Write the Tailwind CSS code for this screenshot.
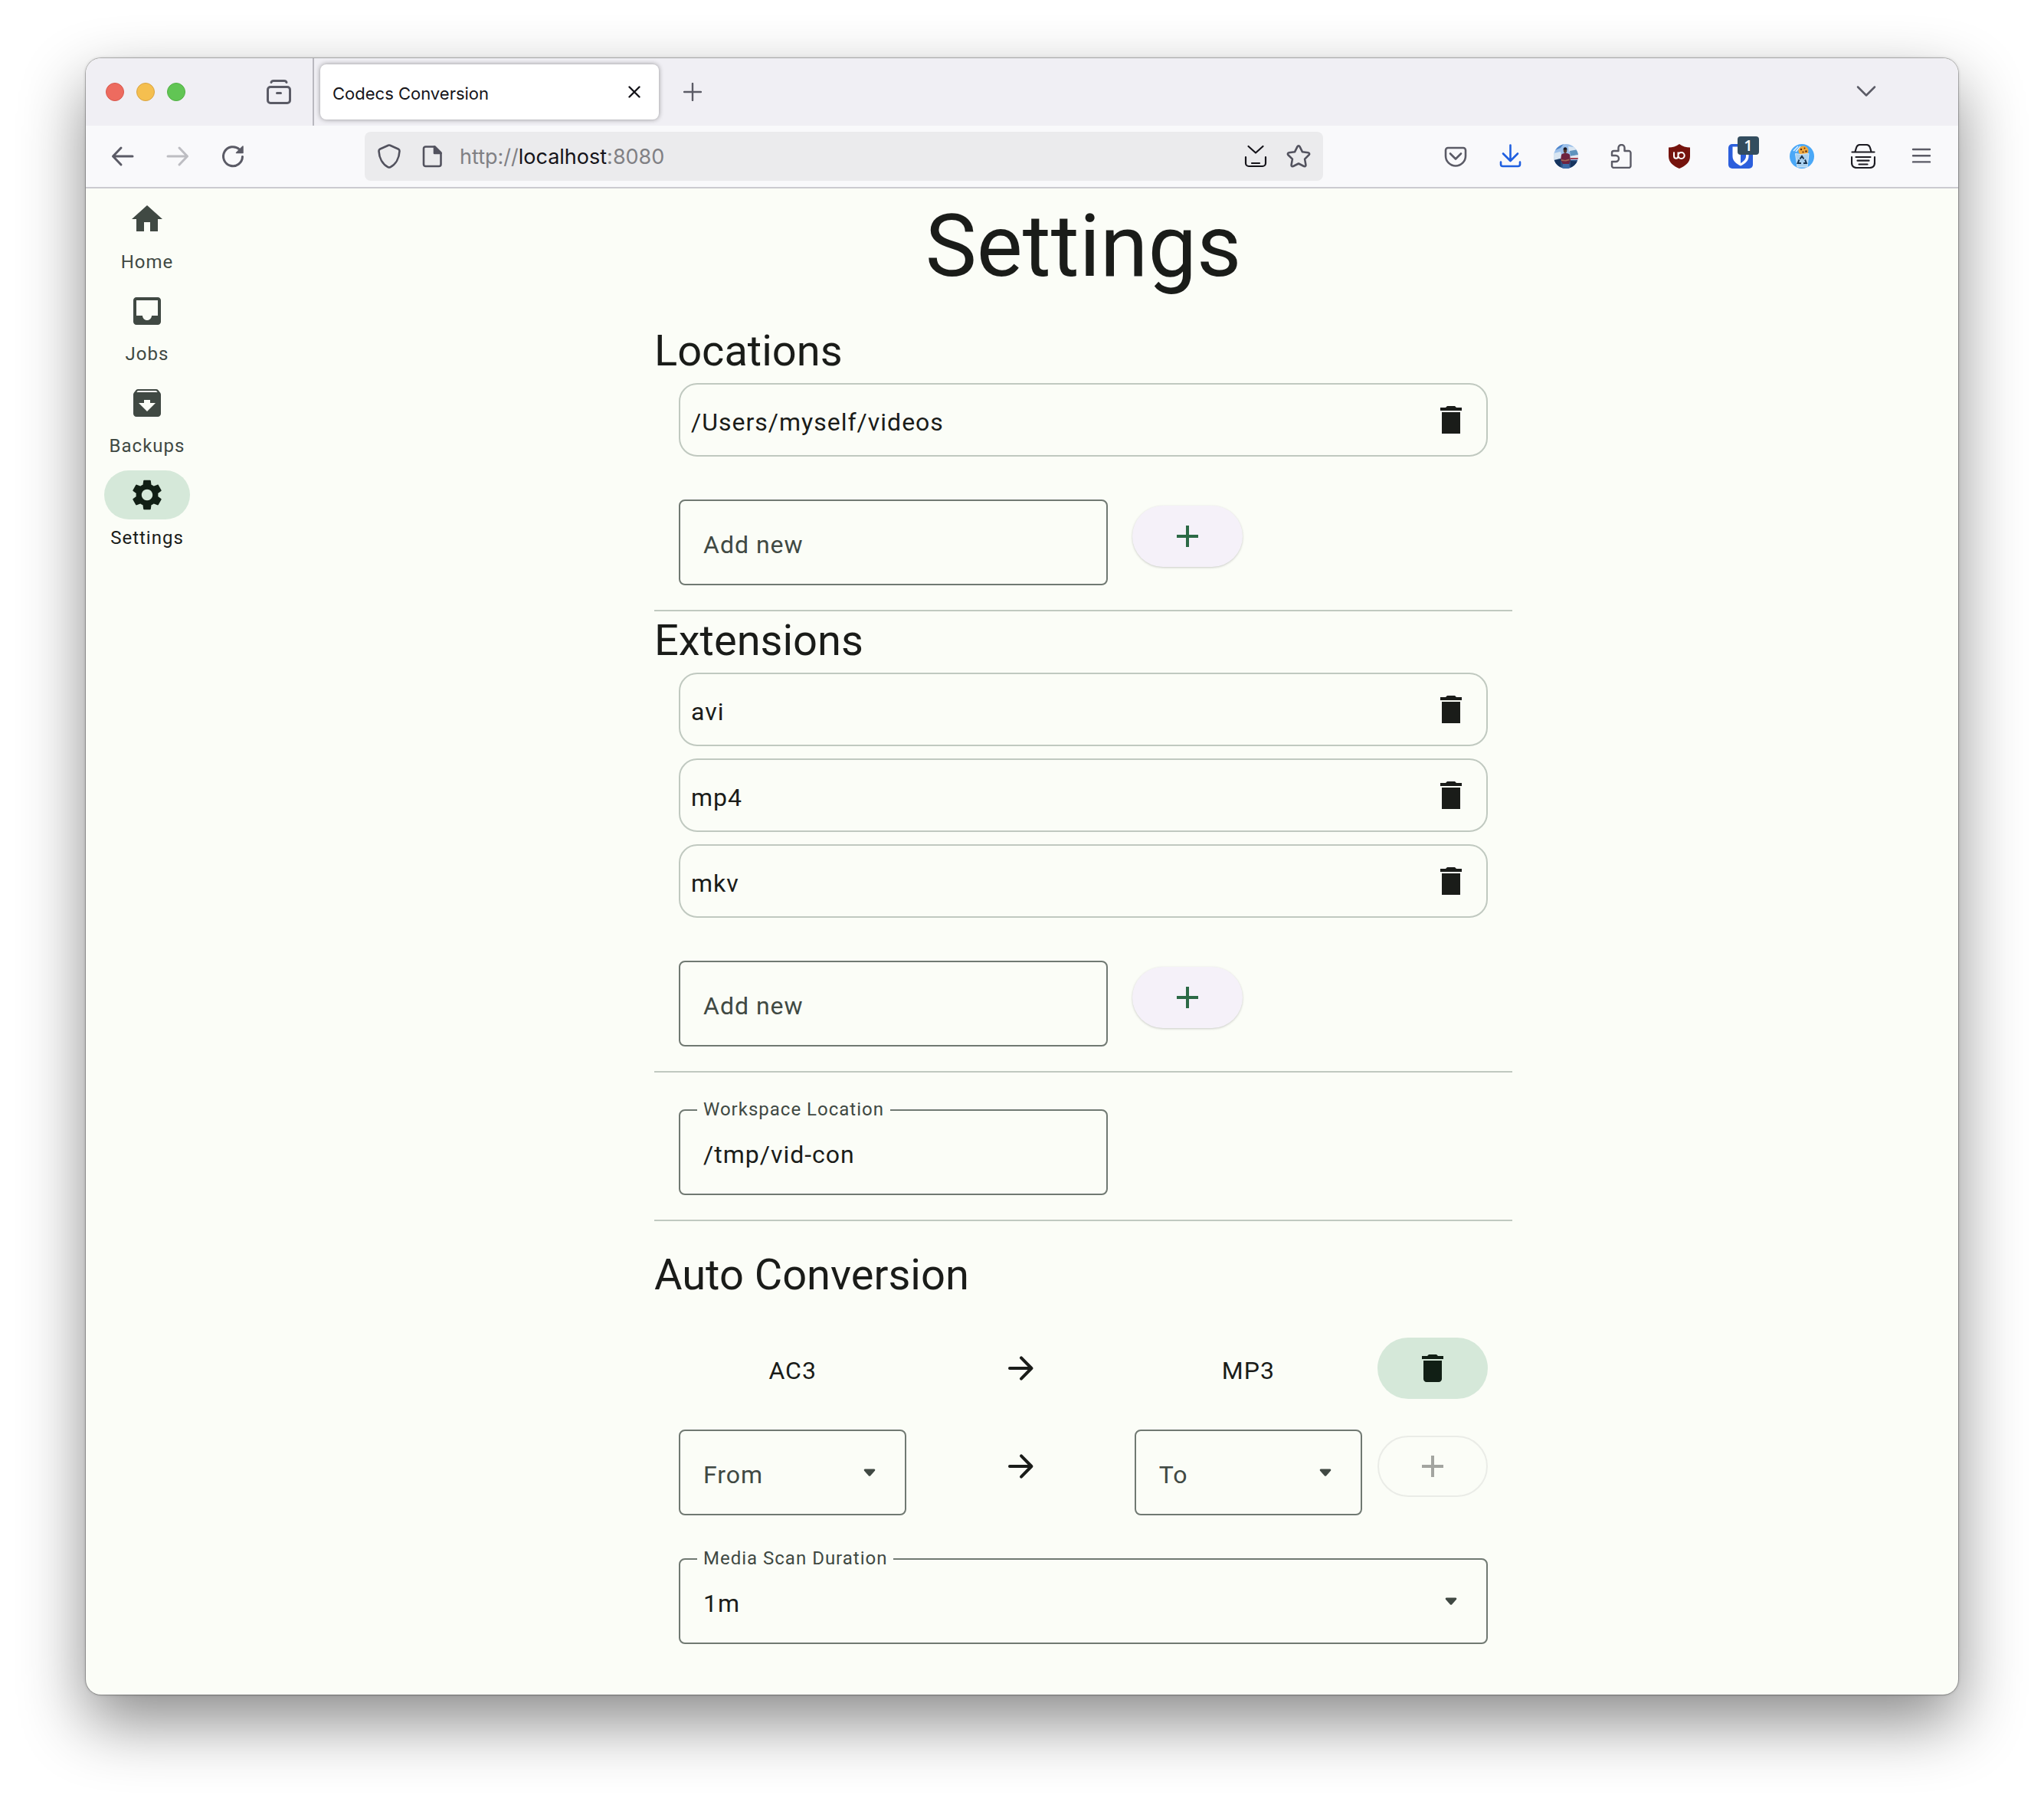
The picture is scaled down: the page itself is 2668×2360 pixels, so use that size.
<!DOCTYPE html>
<html lang="en">
<head>
<meta charset="utf-8">
<title>Codecs Conversion</title>
<script src="https://cdn.jsdelivr.net/npm/@tailwindcss/browser@4"></script>
</head>
<body class="bg-white px-28 pt-19 pb-37 font-[Roboto,sans-serif] text-[#1a1c19]">

<svg class="hidden" aria-hidden="true">
  <symbol id="trash-sharp" viewBox="0 0 24 24"><path d="M6 21h12V7H6zM19 4h-3.500l-1-1h-5l-1 1H5v2h14z"/></symbol>
  <symbol id="trash" viewBox="0 0 24 24"><path d="M6 19c0 1.100.900 2 2 2h8c1.100 0 2-.900 2-2V7H6zM19 4h-3.500l-1-1h-5l-1 1H5v2h14z"/></symbol>
  <symbol id="plus" viewBox="0 0 24 24"><path d="M19 13h-6v6h-2v-6H5v-2h6V5h2v6h6z"/></symbol>
  <symbol id="arrow" viewBox="0 0 24 24"><path d="M5 12h14M12.500 5.200 19.200 12l-6.700 6.800" fill="none" stroke="currentColor" stroke-width="2" stroke-linecap="round" stroke-linejoin="round"/></symbol>
  <symbol id="caret" viewBox="0 0 24 24"><path d="M9 9.800h6c.600 0 .800.700.500 1.100l-3 3.300c-.300.300-.700.300-1 0l-3-3.300c-.300-.400-.100-1.100.500-1.100z"/></symbol>
</svg>

<div class="overflow-hidden rounded-[20px] bg-[#fbfdf7] shadow-[0_0_0_1px_rgba(0,0,0,0.22),0_0_4px_rgba(0,0,0,0.2),0_36px_84px_rgba(0,0,0,0.46)]">

  <!-- Tab strip -->
  <div class="flex h-22 items-center bg-[#f0eff4] pr-26">
    <div class="flex gap-4 pl-[26px]">
      <span class="size-6 rounded-full border border-[#d8574c] bg-[#ed6b5f]"></span>
      <span class="size-6 rounded-full border border-[#d9a441] bg-[#f5bf4f]"></span>
      <span class="size-6 rounded-full border border-[#52b044] bg-[#61c554]"></span>
    </div>
    <button aria-label="Recent browsing" class="ml-[106px] text-[#5b5b66]">
      <svg class="size-8" viewBox="0 0 32 32" fill="none" stroke="currentColor" stroke-width="3" stroke-linecap="round"><rect x="1.500" y="9.500" width="29" height="21" rx="3.500"/><path d="M6 3.500C6.500 2 7.500 1.500 9 1.500h14c1.500 0 2.500.500 3 2M13.500 17.500h5"/></svg>
    </button>
    <div class="ml-7 h-full w-0.5 bg-[#b9b8bf]"></div>
    <div class="ml-2 flex h-18 w-[442px] items-center justify-between rounded-lg bg-white pr-6 pl-4 shadow-[0_0_6px_rgba(0,0,0,0.4)]">
      <span class="pt-1 font-[Inter,sans-serif] text-[22px] leading-8 text-[#15141a]">Codecs Conversion</span>
      <button aria-label="Close tab" class="text-[#15141a]">
        <svg class="size-4" viewBox="0 0 16 16" fill="none" stroke="currentColor" stroke-width="2.400" stroke-linecap="round"><path d="M1.500 1.500l13 13M14.500 1.500l-13 13"/></svg>
      </button>
    </div>
    <button aria-label="New tab" class="ml-8 text-[#5b5b66]">
      <svg class="size-6" viewBox="0 0 24 24" fill="none" stroke="currentColor" stroke-width="2.400" stroke-linecap="round"><path d="M12 1v22M1 12h22"/></svg>
    </button>
    <button aria-label="List all tabs" class="ml-auto text-[#5b5b66]">
      <svg class="size-8" viewBox="0 0 32 32" fill="none" stroke="currentColor" stroke-width="2.500" stroke-linecap="round" stroke-linejoin="round"><path d="M5 9.500l11 11 11-11"/></svg>
    </button>
  </div>

  <!-- Navigation toolbar -->
  <div class="flex h-[82px] items-center border-b-2 border-[#cccbd0] bg-[#f9f9fb] pr-8 text-[#5b5b66]">
    <div class="flex w-[364px] shrink-0 gap-10 pl-8">
      <button aria-label="Back"><svg class="size-8" viewBox="0 0 32 32" fill="none" stroke="currentColor" stroke-width="3" stroke-linecap="round" stroke-linejoin="round"><path d="M29 16H3.500M14 5 3.500 16 14 27"/></svg></button>
      <button aria-label="Forward" disabled class="text-[#bdbdc2]"><svg class="size-8" viewBox="0 0 32 32" fill="none" stroke="currentColor" stroke-width="3" stroke-linecap="round" stroke-linejoin="round"><path d="M3 16h25.500M18 5l10.500 11L18 27"/></svg></button>
      <button aria-label="Reload"><svg class="size-8" viewBox="0 0 32 32" fill="none" stroke="currentColor" stroke-width="3" stroke-linecap="round"><path d="M28.500 16.500A12.500 12.500 0 1 1 24.500 7"/><path d="M29 3v8.500h-8.500z" fill="currentColor" stroke-width="1.500" stroke-linejoin="round"/></svg></button>
    </div>
    <div class="flex h-16 flex-1 items-center rounded-lg bg-[#ebebed] pr-4 pl-4">
      <svg class="size-8 shrink-0" viewBox="0 0 32 32" fill="none" stroke="#52525e" stroke-width="2.600" stroke-linejoin="round"><path d="M14.800 1.800a3 3 0 0 1 2.400 0l10.600 4.700a3 3 0 0 1 1.700 2.900C29 18 25 26.500 17.200 30.300a3 3 0 0 1-2.400 0C7 26.500 3 18 2.500 9.400a3 3 0 0 1 1.700-2.900z"/></svg>
      <svg class="ml-6 size-8 shrink-0" viewBox="0 0 32 32" fill="none" stroke="#52525e" stroke-width="2.600" stroke-linejoin="round"><path d="M7.500 3.500h12l8 8v15a2.500 2.500 0 0 1-2.500 2.500H7.500A2.500 2.500 0 0 1 5 26.500V6a2.500 2.500 0 0 1 2.500-2.500z"/><path d="M19 3.500v8.500h8.500z" fill="#52525e"/></svg>
      <div role="textbox" aria-label="Address" class="ml-5 flex-1 pt-0.5 font-[Inter,sans-serif] text-[27px] leading-10 text-[#808084]">http://<span class="text-[#15141a]">localhost</span>:8080</div>
      <div class="flex gap-6">
        <button aria-label="Save"><svg class="size-8" viewBox="0 0 32 32" fill="none" stroke="#15141a" stroke-width="2.200" stroke-linecap="round" stroke-linejoin="round"><path d="M6.500 3 16 11.500 25.500 3M3 17v8a4 4 0 0 0 4 4h18a4 4 0 0 0 4-4v-8M11 25h10"/></svg></button>
        <button aria-label="Bookmark this page"><svg class="size-8" viewBox="0 0 32 32" fill="none" stroke="#52525e" stroke-width="2.600" stroke-linejoin="round"><path d="M14.600 3.200c.600-1.300 2.200-1.300 2.800 0l3.500 7 7.700 1.100c1.500.200 2 1.900 1 2.900l-5.500 5.400 1.300 7.700c.200 1.500-1.200 2.400-2.400 1.700L16 25.500 9 29c-1.200.700-2.600-.200-2.400-1.700l1.300-7.700-5.500-5.400c-1-1-.500-2.700 1-2.900l7.700-1.100z"/></svg></button>
      </div>
    </div>
    <div class="ml-[157px] flex shrink-0 items-center gap-11">
      <div class="flex gap-10">
        <button aria-label="Pocket"><svg class="size-8" viewBox="0 0 32 32" fill="none" stroke="currentColor" stroke-width="2.600" stroke-linecap="round" stroke-linejoin="round"><path d="M6 5h20a3 3 0 0 1 3 3v7.500a13 13 0 0 1-26 0V8a3 3 0 0 1 3-3z"/><path d="M9 12.500l7 7 7-7"/></svg></button>
        <button aria-label="Downloads"><svg class="size-8" viewBox="0 0 32 32" fill="none" stroke="#1f5fe0" stroke-width="2.600" stroke-linecap="round" stroke-linejoin="round"><path d="M15.500 1.500v20M6 12.500l9.500 9.500 9.500-9.500M3 23.500v3A2.500 2.500 0 0 0 5.500 29h20a2.500 2.500 0 0 0 2.500-2.500v-3"/></svg></button>
        <button aria-label="Account"><svg class="size-8" viewBox="0 0 32 32"><clipPath id="av"><circle cx="16" cy="16" r="16"/></clipPath><g clip-path="url(#av)"><path fill="#9cc0ea" d="M0 0h32v32H0z"/><path fill="#4f86cc" d="M0 0h13l-4 5-9 4z"/><path fill="#d9e6f2" d="M0 12l9-2 2 9-11 3zM19 3l13 2v5H20z"/><path fill="#5f93bd" d="M21 9l11-2v7l-10 2z"/><path fill="#e4e8f0" d="M21 16l11-2v4H21z"/><path fill="#2c4f80" d="M0 21h32v11H0z"/><path fill="#a3404f" d="M22 18h10v2H22z"/><path fill="#17345e" d="M0 21l9-2v13H0zM22 22l10 1v9H22z"/><path fill="#6e2340" d="M10 14c1-1.500 3-2 5.500-2s4.500.500 5.500 2l1 7-2 5h-8l-3-5z"/><path fill="#a06a5a" d="M10 20l5 1 5-1.500 1 1.500-5 1.500-6-.500z"/><path fill="#3d6ca8" d="M12 26h8l1 6H11z"/><ellipse cx="15" cy="8.500" rx="2.200" ry="3.400" fill="#59382f"/><path fill="#1b1720" d="M12.500 7.500c-.300-4.500 5.300-4.500 5 0z"/></g></svg></button>
        <button aria-label="Extensions"><svg class="size-8" viewBox="0 0 32 32" fill="none" stroke="currentColor" stroke-width="2.400" stroke-linejoin="round"><path d="M12.500 9V5a4 4 0 0 1 8 0v4H26a2.500 2.500 0 0 1 2.500 2.500v17A2.500 2.500 0 0 1 26 31H6.500A2.500 2.500 0 0 1 4 28.500V23h5a4 4 0 0 0 0-8H4v-3.500A2.500 2.500 0 0 1 6.500 9z"/></svg></button>
      </div>
      <div class="flex gap-12">
        <button aria-label="uBlock Origin"><svg class="size-8" viewBox="0 0 32 32"><path fill="#75130d" d="M16 0c4 3 9 4.500 14 4.500V16c0 8-6 12.500-14 16C8 28.500 2 24 2 16V4.500C7 4.500 12 3 16 0z"/><path d="M9 10.500v5.200c0 4 5.500 4 5.500 0v-5.200M14.500 15a4.100 4.100 0 1 0 8.200 0 4.100 4.100 0 0 0-8.200 0" fill="none" stroke="#fff" stroke-width="2"/></svg></button>
        <button aria-label="Bitwarden" class="relative"><svg class="size-8" viewBox="0 0 32 32"><rect width="32" height="32" rx="5" fill="#2c5fdc"/><path fill="#fff" d="M5.500 3.500h21V16c0 6-5 10-10.500 12.500C10.500 26 5.500 22 5.500 16z"/><path fill="#2c5fdc" d="M16 7h7v9c0 4-3.500 7-7 9z"/></svg><span class="absolute -top-2.5 left-3 flex h-6 w-7 items-center justify-center rounded bg-[#334d5f] font-[Open_Sans,sans-serif] text-xl leading-6 font-semibold text-white">1</span></button>
        <button aria-label="Cookie AutoDelete"><svg class="size-8" viewBox="0 0 32 32"><circle cx="16" cy="16" r="16" fill="#4aa8f7"/><path d="M5 9l6-6M8 10l6-7" stroke="#e4f2ff" stroke-width="1.500"/><circle cx="18" cy="9" r="6.500" fill="#f2a93b"/><g fill="#5a2f16"><circle cx="15" cy="7" r="1.200"/><circle cx="19.500" cy="5.500" r="1"/><circle cx="21.500" cy="9.500" r="1.300"/><circle cx="17.500" cy="10.500" r="1.100"/></g><path fill="#a9d0ee" stroke="#d3e8f8" d="M7.500 12.500 14 13.500l11-1-2 17.500H10z"/><path d="M13.500 19.500l2.500-3.500 2.500 3.500M20 20.500l2 4.500h-4M15 25h-4.500l2-4.500" fill="none" stroke="#17324d" stroke-width="1.900"/></svg></button>
        <button aria-label="Print friendly"><svg class="size-8" viewBox="0 0 32 32" fill="none" stroke="#1c1b22" stroke-width="2.200" stroke-linecap="round" stroke-linejoin="round"><path d="M1.500 10.500h29M5.500 10l1.300-4.500C7.600 2.500 9 1 12 1h8c3 0 4.400 1.500 5.200 4.500L26.500 10M1 17v7c0 5 2 7 6.500 7h17c4.500 0 6.500-2 6.500-7v-7M6.500 17h19M8.500 21.700h15M10.500 26.500h11"/></svg></button>
      </div>
      <button aria-label="Menu"><svg class="size-8" viewBox="0 0 32 32" fill="none" stroke="currentColor" stroke-width="2.400" stroke-linecap="round"><path d="M5 7h22M5 15.200h22M5 23.400h22"/></svg></button>
    </div>
  </div>

  <!-- Page -->
  <div class="flex">
    <nav class="flex w-40 shrink-0 flex-col items-center gap-4 pt-2 text-2xl leading-8 tracking-[1px] text-[#404943]">
      <a href="#home" class="flex flex-col items-center gap-2">
        <span class="flex h-16 w-28 items-center justify-center rounded-full"><svg class="size-12" viewBox="0 0 24 24" fill="currentColor"><path d="M10 20v-6h4v6h5v-8h3L12 3 2 12h3v8z"/></svg></span>
        Home
      </a>
      <a href="#jobs" class="flex flex-col items-center gap-2">
        <span class="flex h-16 w-28 items-center justify-center rounded-full"><svg class="size-12" viewBox="0 0 24 24" fill="currentColor"><path d="M19 3H5c-1.100 0-2 .900-2 2v14c0 1.100.900 2 2 2h14c1.100 0 2-.900 2-2V5c0-1.100-.900-2-2-2zm0 12h-4c0 1.660-1.350 3-3 3s-3-1.340-3-3H5V5h14z"/></svg></span>
        Jobs
      </a>
      <a href="#backups" class="flex flex-col items-center gap-2">
        <span class="flex h-16 w-28 items-center justify-center rounded-full"><svg class="size-12" viewBox="0 0 24 24" fill="currentColor"><path d="M20.540 5.230l-1.390-1.680C18.880 3.210 18.470 3 18 3H6c-.470 0-.880.210-1.160.550L3.460 5.230C3.170 5.570 3 6.020 3 6.500V19c0 1.100.900 2 2 2h14c1.100 0 2-.900 2-2V6.500c0-.480-.170-.930-.460-1.270zM12 17.500L6.500 12H10v-2h4v2h3.500zM5.120 5l.810-1h12l.940 1z"/></svg></span>
        Backups
      </a>
      <a href="#settings" aria-current="page" class="flex flex-col items-center gap-2 text-[#1a1c19]">
        <span class="flex h-16 w-28 items-center justify-center rounded-full bg-[#d5e8d9] text-[#111f15]"><svg class="size-12" viewBox="0 0 24 24" fill="currentColor"><path d="M19.140 12.940c.040-.300.060-.610.060-.940 0-.320-.020-.640-.070-.940l2.030-1.580c.180-.140.230-.410.120-.610l-1.920-3.320c-.120-.220-.370-.290-.590-.220l-2.390.960c-.500-.380-1.030-.700-1.620-.940l-.360-2.540c-.040-.240-.240-.410-.480-.410h-3.840c-.240 0-.430.170-.470.410l-.360 2.540c-.590.240-1.130.570-1.620.940l-2.390-.960c-.220-.080-.470 0-.590.220L2.740 8.870c-.120.210-.080.470.120.610l2.030 1.580c-.050.300-.090.630-.090.940s.020.640.070.940l-2.030 1.580c-.180.140-.230.410-.120.610l1.920 3.320c.120.220.370.290.590.220l2.390-.960c.500.380 1.030.700 1.620.940l.360 2.540c.050.240.240.410.480.410h3.840c.240 0 .440-.170.470-.410l.360-2.540c.590-.240 1.130-.560 1.620-.940l2.390.960c.220.080.470 0 .590-.220l1.920-3.320c.120-.220.070-.470-.120-.610zM12 15.600c-1.980 0-3.600-1.620-3.600-3.600s1.620-3.600 3.600-3.600 3.600 1.620 3.600 3.600-1.620 3.600-3.600 3.600z"/></svg></span>
        Settings
      </a>
    </nav>

    <main class="flex-1 pb-[66px] text-[32px] leading-12">
      <div class="mx-auto max-w-[1120px]">
        <h1 class="mb-5.5 text-center text-[113px] leading-[152px]">Settings</h1>

        <section>
          <h2 class="mb-1 text-[56px] leading-[76px]">Locations</h2>
          <div class="px-8">
            <ul class="flex flex-col gap-4">
              <li class="flex h-24 items-center justify-between rounded-3xl border-2 border-[#c0c9c0] pr-5.5 pl-3.5 tracking-[1px]"><span class="pt-1.5">/Users/myself/videos</span><button aria-label="Remove /Users/myself/videos"><svg class="size-12 fill-current"><use href="#trash-sharp"/></svg></button></li>
            </ul>
            <form class="mt-10 flex items-center gap-8">
              <div class="w-[560px] pt-4"><input type="text" aria-label="New location" placeholder="Add new" class="block h-28 w-full rounded-lg border-2 border-[#707972] px-7.5 pt-1.5 tracking-[1px] placeholder:text-[#404943]"></div>
              <button type="button" aria-label="Add location" class="flex h-20 w-36 items-center justify-center rounded-full bg-[#f5f1f9] text-[#2c6a46] shadow-[0_1px_3px_rgba(0,0,0,0.2)]"><svg class="size-12 fill-current"><use href="#plus"/></svg></button>
            </form>
          </div>
        </section>

        <section class="mt-8 border-t-2 border-[#c0c9c0]">
          <h2 class="mb-1 text-[56px] leading-[76px]">Extensions</h2>
          <div class="px-8">
            <ul class="flex flex-col gap-4">
              <li class="flex h-24 items-center justify-between rounded-3xl border-2 border-[#c0c9c0] pr-5.5 pl-3.5 tracking-[1px]"><span class="pt-1.5">avi</span><button aria-label="Remove avi"><svg class="size-12 fill-current"><use href="#trash-sharp"/></svg></button></li>
              <li class="flex h-24 items-center justify-between rounded-3xl border-2 border-[#c0c9c0] pr-5.5 pl-3.5 tracking-[1px]"><span class="pt-1.5">mp4</span><button aria-label="Remove mp4"><svg class="size-12 fill-current"><use href="#trash-sharp"/></svg></button></li>
              <li class="flex h-24 items-center justify-between rounded-3xl border-2 border-[#c0c9c0] pr-5.5 pl-3.5 tracking-[1px]"><span class="pt-1.5">mkv</span><button aria-label="Remove mkv"><svg class="size-12 fill-current"><use href="#trash-sharp"/></svg></button></li>
            </ul>
            <form class="mt-10 flex items-center gap-8">
              <div class="w-[560px] pt-4"><input type="text" aria-label="New extension" placeholder="Add new" class="block h-28 w-full rounded-lg border-2 border-[#707972] px-7.5 pt-1.5 tracking-[1px] placeholder:text-[#404943]"></div>
              <button type="button" aria-label="Add extension" class="flex h-20 w-36 items-center justify-center rounded-full bg-[#f5f1f9] text-[#2c6a46] shadow-[0_1px_3px_rgba(0,0,0,0.2)]"><svg class="size-12 fill-current"><use href="#plus"/></svg></button>
            </form>
          </div>
        </section>

        <section class="mt-8 border-t-2 border-[#c0c9c0] px-8 pt-8">
          <div class="relative w-[560px] pt-4">
            <label for="workspace" class="absolute top-0 left-6 bg-[#fbfdf7] px-2 text-2xl leading-8 tracking-[1px] text-[#404943]">Workspace Location</label>
            <input id="workspace" type="text" value="/tmp/vid-con" class="block h-28 w-full rounded-lg border-2 border-[#707972] px-7.5 pt-1.5 tracking-[1px]">
          </div>
        </section>

        <section class="mt-8 border-t-2 border-[#c0c9c0] pt-8">
          <h2 class="text-[56px] leading-[76px]">Auto Conversion</h2>
          <div class="mt-11 px-8">
            <div class="flex items-center gap-5">
              <div class="grid flex-1 grid-cols-3 items-center text-center tracking-[1px]">
                <span class="pt-1.5">AC3</span>
                <svg class="mx-auto size-12"><use href="#arrow"/></svg>
                <span class="pt-1.5">MP3</span>
              </div>
              <button aria-label="Remove conversion" class="flex h-20 w-36 items-center justify-center rounded-full bg-[#d5e8d9] text-[#111f15]"><svg class="size-12 fill-current"><use href="#trash"/></svg></button>
            </div>
            <div class="mt-6 flex items-center gap-5">
              <div class="grid flex-1 grid-cols-3 items-center">
                <div class="relative pt-4">
                  <select aria-label="From" class="block h-28 w-full appearance-none rounded-lg border-2 border-[#707972] px-7.5 pt-1.5 tracking-[1px] text-[#404943]"><option>From</option></select>
                  <svg class="pointer-events-none absolute right-6 bottom-8 size-12 fill-[#404943]"><use href="#caret"/></svg>
                </div>
                <svg class="mx-auto size-12"><use href="#arrow"/></svg>
                <div class="relative pt-4">
                  <select aria-label="To" class="block h-28 w-full appearance-none rounded-lg border-2 border-[#707972] px-7.5 pt-1.5 tracking-[1px] text-[#404943]"><option>To</option></select>
                  <svg class="pointer-events-none absolute right-6 bottom-8 size-12 fill-[#404943]"><use href="#caret"/></svg>
                </div>
              </div>
              <button aria-label="Add conversion" disabled class="flex h-20 w-36 items-center justify-center rounded-full border-2 border-[#eaece7] text-[#a3a5a0]"><svg class="size-12 fill-current"><use href="#plus"/></svg></button>
            </div>
            <div class="relative mt-10 pt-4">
              <label for="duration" class="absolute top-0 left-6 bg-[#fbfdf7] px-2 text-2xl leading-8 tracking-[1px] text-[#404943]">Media Scan Duration</label>
              <select id="duration" class="block h-28 w-full appearance-none rounded-lg border-2 border-[#707972] px-7.5 pt-1.5 tracking-[1px]"><option>1m</option></select>
              <svg class="pointer-events-none absolute right-6 bottom-8 size-12 fill-[#404943]"><use href="#caret"/></svg>
            </div>
          </div>
        </section>
      </div>
    </main>
  </div>
</div>
</body>
</html>
